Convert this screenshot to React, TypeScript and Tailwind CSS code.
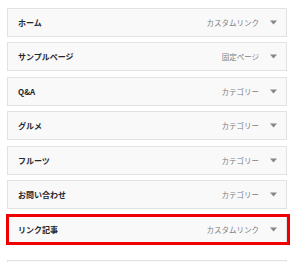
import React from 'react';

interface MenuItem {
  title: string;
  type: string;
  mt: string;
  highlight?: boolean;
}

const items: MenuItem[] = [
  { title: 'ホーム', type: 'カスタムリンク', mt: 'mt-[8px]' },
  { title: 'サンプルページ', type: '固定ページ', mt: 'mt-[5px]' },
  { title: 'Q&A', type: 'カテゴリー', mt: 'mt-[6px]' },
  { title: 'グルメ', type: 'カテゴリー', mt: 'mt-[5px]' },
  { title: 'フルーツ', type: 'カテゴリー', mt: 'mt-[6px]' },
  { title: 'お問い合わせ', type: 'カテゴリー', mt: 'mt-[5px]' },
  { title: 'リンク記事', type: 'カスタムリンク', mt: 'mt-[6px]', highlight: true },
];

const Arrow = () => (
  <svg width="7" height="5" viewBox="0 0 7 5" className="ml-[11px]">
    <path d="M0 0.5h7L3.5 4.5z" fill="#82878c" />
  </svg>
);

const App: React.FC = () => {
  return (
    <div
      className="w-[300px] h-[262px] overflow-hidden bg-white pl-[7px]"
      style={{ fontFamily: '"Noto Sans CJK JP", "Noto Sans", sans-serif' }}
    >
      {items.map((item) => (
        <div
          key={item.title}
          className={`relative ${item.mt} w-[280px] h-[29px] flex items-center justify-between pl-[10px] pr-[9px] bg-[#f9f9f9] border border-[#e2e2e2]`}
        >
          <span className="text-[8px] font-bold text-[#23282d] leading-none">{item.title}</span>
          <div className="flex items-center">
            <span className="text-[7.5px] text-[#7b7f84] leading-none">{item.type}</span>
            <Arrow />
          </div>
          {item.highlight && (
            <div className="absolute -left-[2px] -top-[2px] -right-[4px] -bottom-[2px] border-[3px] border-[#f00000]" />
          )}
        </div>
      ))}
      <div className="mt-[16px] w-[280px] h-[29px] bg-[#f9f9f9] border border-[#e2e2e2]" />
    </div>
  );
};

export default App;
